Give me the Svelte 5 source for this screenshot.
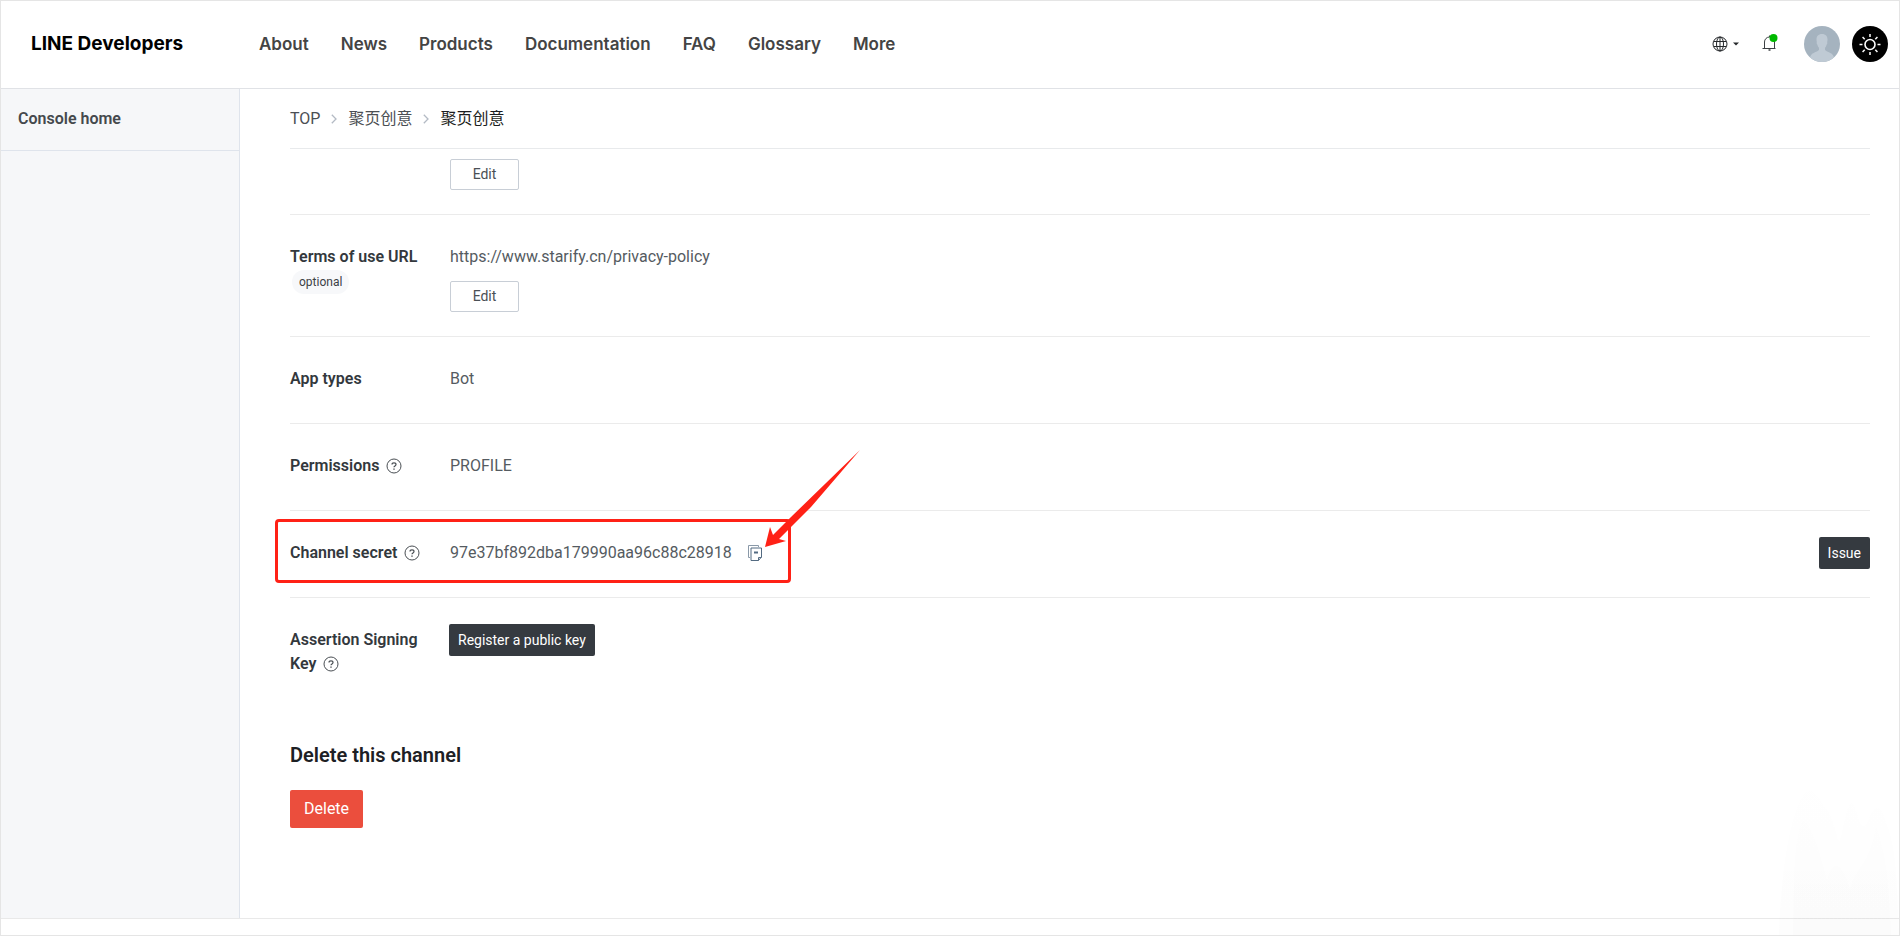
<script>
  const nav = ['About', 'News', 'Products', 'Documentation', 'FAQ', 'Glossary', 'More'];
  const crumbs = ['TOP', '聚页创意', '聚页创意'];
  const rays = [0, 45, 90, 135, 180, 225, 270, 315];
</script>

{#snippet help(topic)}
  <button class="icon-button" aria-label={`Help: ${topic}`}>
    <svg width="16" height="16" viewBox="0 0 16 16" fill="none" stroke="#4a4f54">
      <circle cx="8" cy="8" r="7" />
      <path d="M6 6.6C6 5.4 6.9 4.8 8 4.8s2 .7 2 1.7c0 1.4-2 1.4-2 2.7" stroke-width="1.2" />
      <path d="M8 10.4v1.3" stroke-width="1.4" />
    </svg>
  </button>
{/snippet}

<div class="page">
  <header>
    <a class="logo" href="#top">LINE Developers</a>
    <nav aria-label="Main">
      {#each nav as item}
        <a href={`#${item.toLowerCase()}`}>{item}</a>
      {/each}
    </nav>
    <div class="tools">
      <button class="icon-button language" aria-label="Language">
        <svg width="16" height="16" viewBox="0 0 16 16" fill="none" stroke="#25282b">
          <circle cx="8" cy="8" r="7" />
          <ellipse cx="8" cy="8" rx="3.5" ry="7" />
          <path d="M8 1v14M1.8 5.5h12.4M1.8 10.5h12.4" />
        </svg>
        <svg width="6" height="4" viewBox="0 0 6 4"><path d="M0 .5h6L3 3.5z" fill="#25282b" /></svg>
      </button>
      <button class="icon-button bell" aria-label="Notifications">
        <svg width="18" height="20" viewBox="0 0 18 20" fill="none" stroke="#3c4044">
          <path d="M3.5 14.5V8a5 5 0 0 1 10 0v6.500M1.500 14.500h13M8.500 3V1.500" />
          <path d="M7.500 16h2" stroke-width="1.500" />
          <circle cx="12.500" cy="4" r="4" fill="#00b900" stroke="none" />
        </svg>
      </button>
      <button class="icon-button" aria-label="Account">
        <svg width="36" height="36" viewBox="0 0 36 36">
          <defs><clipPath id="avatar-clip"><circle cx="18" cy="18" r="18" /></clipPath></defs>
          <g clip-path="url(#avatar-clip)">
            <path d="M0 0h36v36H0z" fill="#a5b3bf" />
            <path d="M18 8c3.700 0 5.500 2.300 5.500 5.500 0 1.200-.1 1.900-.4 2.700.5.3.4 1.500-.5 2.500-.4 1.600-1 2.500-1.600 3.100v2.200c1.500 1.700 6.500 2.500 8.200 5.500 1 1.800 1.300 4 1.300 7h-25c0-3 .3-5.200 1.300-7 1.700-3 6.700-3.800 8.200-5.500v-2.200c-.6-.6-1.200-1.500-1.600-3.100-.9-1-1-2.200-.5-2.500-.3-.8-.4-1.500-.4-2.700C12.500 10.300 14.300 8 18 8z" fill="#bfcad4" />
          </g>
        </svg>
      </button>
      <button class="icon-button" aria-label="Switch theme">
        <svg width="36" height="36" viewBox="0 0 36 36" fill="none" stroke="#fff">
          <circle cx="18" cy="18" r="18" fill="#000" stroke="none" />
          <circle cx="18" cy="18.500" r="5" stroke-width="1.600" />
          {#each rays as angle}
            <path d="M18 11V8" stroke-width="1.500" transform={`rotate(${angle} 18 18.500)`} />
          {/each}
        </svg>
      </button>
    </div>
  </header>

  <div class="body">
    <aside>
      <a href="#console">Console home</a>
    </aside>

    <main>
      <nav class="crumbs" aria-label="Breadcrumb">
        {#each crumbs as crumb, i}
          {#if i}
            <svg width="6" height="10" viewBox="0 0 6 10" fill="none" stroke="#b3bac4" stroke-width="1.300"><path d="M.8.8 5 5 .8 9.200" /></svg>
          {/if}
          <a href="#top" class:current={i === 2}>{crumb}</a>
        {/each}
      </nav>

      <section class="row first">
        <div class="label"></div>
        <div class="value"><button class="edit">Edit</button></div>
      </section>

      <section class="row">
        <div class="label">Terms of use URL<span class="badge">optional</span></div>
        <div class="value">
          <p>https://www.starify.cn/privacy-policy</p>
          <button class="edit spaced">Edit</button>
        </div>
      </section>

      <section class="row">
        <div class="label">App types</div>
        <div class="value">Bot</div>
      </section>

      <section class="row">
        <div class="label">Permissions {@render help('Permissions')}</div>
        <div class="value">PROFILE</div>
      </section>

      <section class="row">
        <div class="label">Channel secret {@render help('Channel secret')}</div>
        <div class="value secret">
          97e37bf892dba179990aa96c88c28918
          <button class="icon-button" aria-label="Copy">
            <svg width="16" height="16" viewBox="0 0 16 16" fill="none" stroke="#536b82">
              <path d="M3 12.500H1.500v-12h10V2" stroke="#8a99a8" />
              <path d="M4 3h10.500v9L11.500 15.500H4z" />
              <path d="M11.500 15.500V12.500h3" />
              <path d="M7 7.500h4" stroke-width="2" />
            </svg>
          </button>
        </div>
        <button class="dark issue">Issue</button>
        <div class="highlight"></div>
        <svg class="arrow" width="96" height="98" viewBox="0 0 96 98">
          <path d="M0 97 5 77 8 85 26 67 95 0 46 57 25 78 14 89 21 91z" fill="#ff2116" />
        </svg>
      </section>

      <section class="row last">
        <div class="label">Assertion Signing Key {@render help('Assertion Signing Key')}</div>
        <div class="value"><button class="dark register">Register a public key</button></div>
      </section>

      <h2>Delete this channel</h2>
      <button class="delete">Delete</button>
    </main>
  </div>
  <footer></footer>

  <svg class="haze" width="120" height="150" viewBox="0 0 120 150" aria-hidden="true">
    <defs>
      <linearGradient id="haze-fade" x1="0" y1="0" x2="0" y2="1">
        <stop offset="0" stop-color="#000" stop-opacity="0.002" />
        <stop offset="1" stop-color="#000" stop-opacity="0.009" />
      </linearGradient>
    </defs>
    <path d="M0 150C2 90 10 40 20 18 30-5 38 8 44 20 56 30 58 60 61 56 66 35 68 18 73 18 80 25 80 50 88 38 96 16 102 18 108 40 116 60 118 90 120 150z" fill="url(#haze-fade)" />
    <path d="M14 150C15 90 15 50 24 34 34 40 44 80 48 96 54 70 64 80 71 104 78 80 90 82 97 40 110 80 110 110 112 150z" fill="url(#haze-fade)" />
  </svg>
</div>

<style>
  :global(body) { margin: 0; background: #fff; }
  .page {
    position: relative;
    box-sizing: border-box;
    min-height: 100vh;
    display: flex;
    flex-direction: column;
    border: 1px solid #e5e5e5;
    font: 400 16px/24px Roboto, "Noto Sans CJK SC", sans-serif;
    color: #555b61;
  }
  a { color: inherit; text-decoration: none; }
  p { margin: 0; }
  button { font: inherit; cursor: pointer; box-sizing: border-box; margin: 0; }

  header {
    display: flex;
    align-items: center;
    padding: 17px 11px 18px 30px;
    min-height: 52px;
    border-bottom: 1px solid #e0e2e6;
    font-family: Inter, sans-serif;
  }
  .logo { width: 228px; font-size: 19px; font-weight: 700; color: #000; white-space: nowrap; }
  header nav { display: flex; gap: 32px; font-size: 17px; font-weight: 600; color: #444; }
  .tools { margin-left: auto; display: flex; align-items: center; }
  .tools .icon-button + .icon-button { margin-left: 12px; }
  .tools .bell + .icon-button { margin-left: 25px; }
  .tools .language + .bell { margin-left: 22px; }
  .language { display: flex; align-items: center; gap: 5px; }
  .icon-button { border: 0; padding: 0; background: none; }
  .icon-button svg { display: block; }

  .body { flex: 1; display: flex; }
  aside { width: 238px; flex: none; background: #f6f7f9; border-right: 1px solid #dfe4ec; }
  aside a {
    display: block;
    padding: 18px 17px 19px;
    border-bottom: 1px solid #dfe4ec;
    font-weight: 600;
    color: #45494d;
  }
  main { flex: 1; padding: 0 29px 0 50px; }
  .crumbs {
    display: flex;
    align-items: center;
    gap: 11px;
    padding: 18px 0 17px;
    border-bottom: 1px solid #e8eaec;
    color: #4b4f54;
    font-weight: 400;
  }
  .crumbs .current { color: #1c1e21; }

  .row {
    position: relative;
    display: flex;
    gap: 20px;
    box-sizing: border-box;
    min-height: 87px;
    padding: 30px 0 24px;
    border-bottom: 1px solid #ebebeb;
  }
  .row.first { min-height: 0; padding-top: 10px; }
  .row.last { border: 0; }
  .label { width: 140px; flex: none; font-weight: 600; color: #33383d; }
  .label .icon-button { display: inline-block; vertical-align: -3px; margin-left: 3px; }
  .badge {
    display: table;
    margin: 1px 0 0 2px;
    padding: 0 7px;
    border-radius: 12px;
    background: #f7f8fa;
    font-size: 12px;
    font-weight: 400;
    color: #3c4146;
  }
  .value { flex: 1; }
  .secret { display: flex; align-items: center; align-self: flex-start; gap: 15px; }
  .edit {
    display: block;
    width: 69px;
    height: 31px;
    padding: 0 0 2px;
    border: 1px solid #c8ced6;
    border-radius: 2px;
    background: #fff;
    font-size: 14px;
    line-height: 24px;
    color: #4a4f55;
  }
  .spaced { margin-top: 12px; }
  .dark {
    height: 32px;
    padding: 0 9px;
    border: 0;
    border-radius: 2px;
    background: #353a40;
    color: #fff;
    font-size: 14px;
  }
  .issue { align-self: flex-start; margin-top: -4px; }
  .register { display: block; margin: -4px 0 0 -1px; }
  .highlight {
    position: absolute;
    left: -15px;
    top: 8px;
    width: 516px;
    height: 64px;
    box-sizing: border-box;
    border: 3px solid #ff2116;
    border-radius: 4px;
    pointer-events: none;
  }
  .arrow { position: absolute; left: 475px; top: -61px; pointer-events: none; }

  h2 { margin: 43px 0 23px; font-size: 20px; line-height: 24px; font-weight: 600; color: #1d2024; }
  .delete {
    display: block;
    height: 38px;
    padding: 0 14px;
    border: 0;
    border-radius: 2px;
    background: #eb4e3d;
    color: #fff;
  }
  footer { height: 16px; border-top: 1px solid #e9e9e9; }
  .haze { position: absolute; right: 0; bottom: 0; pointer-events: none; }
</style>
